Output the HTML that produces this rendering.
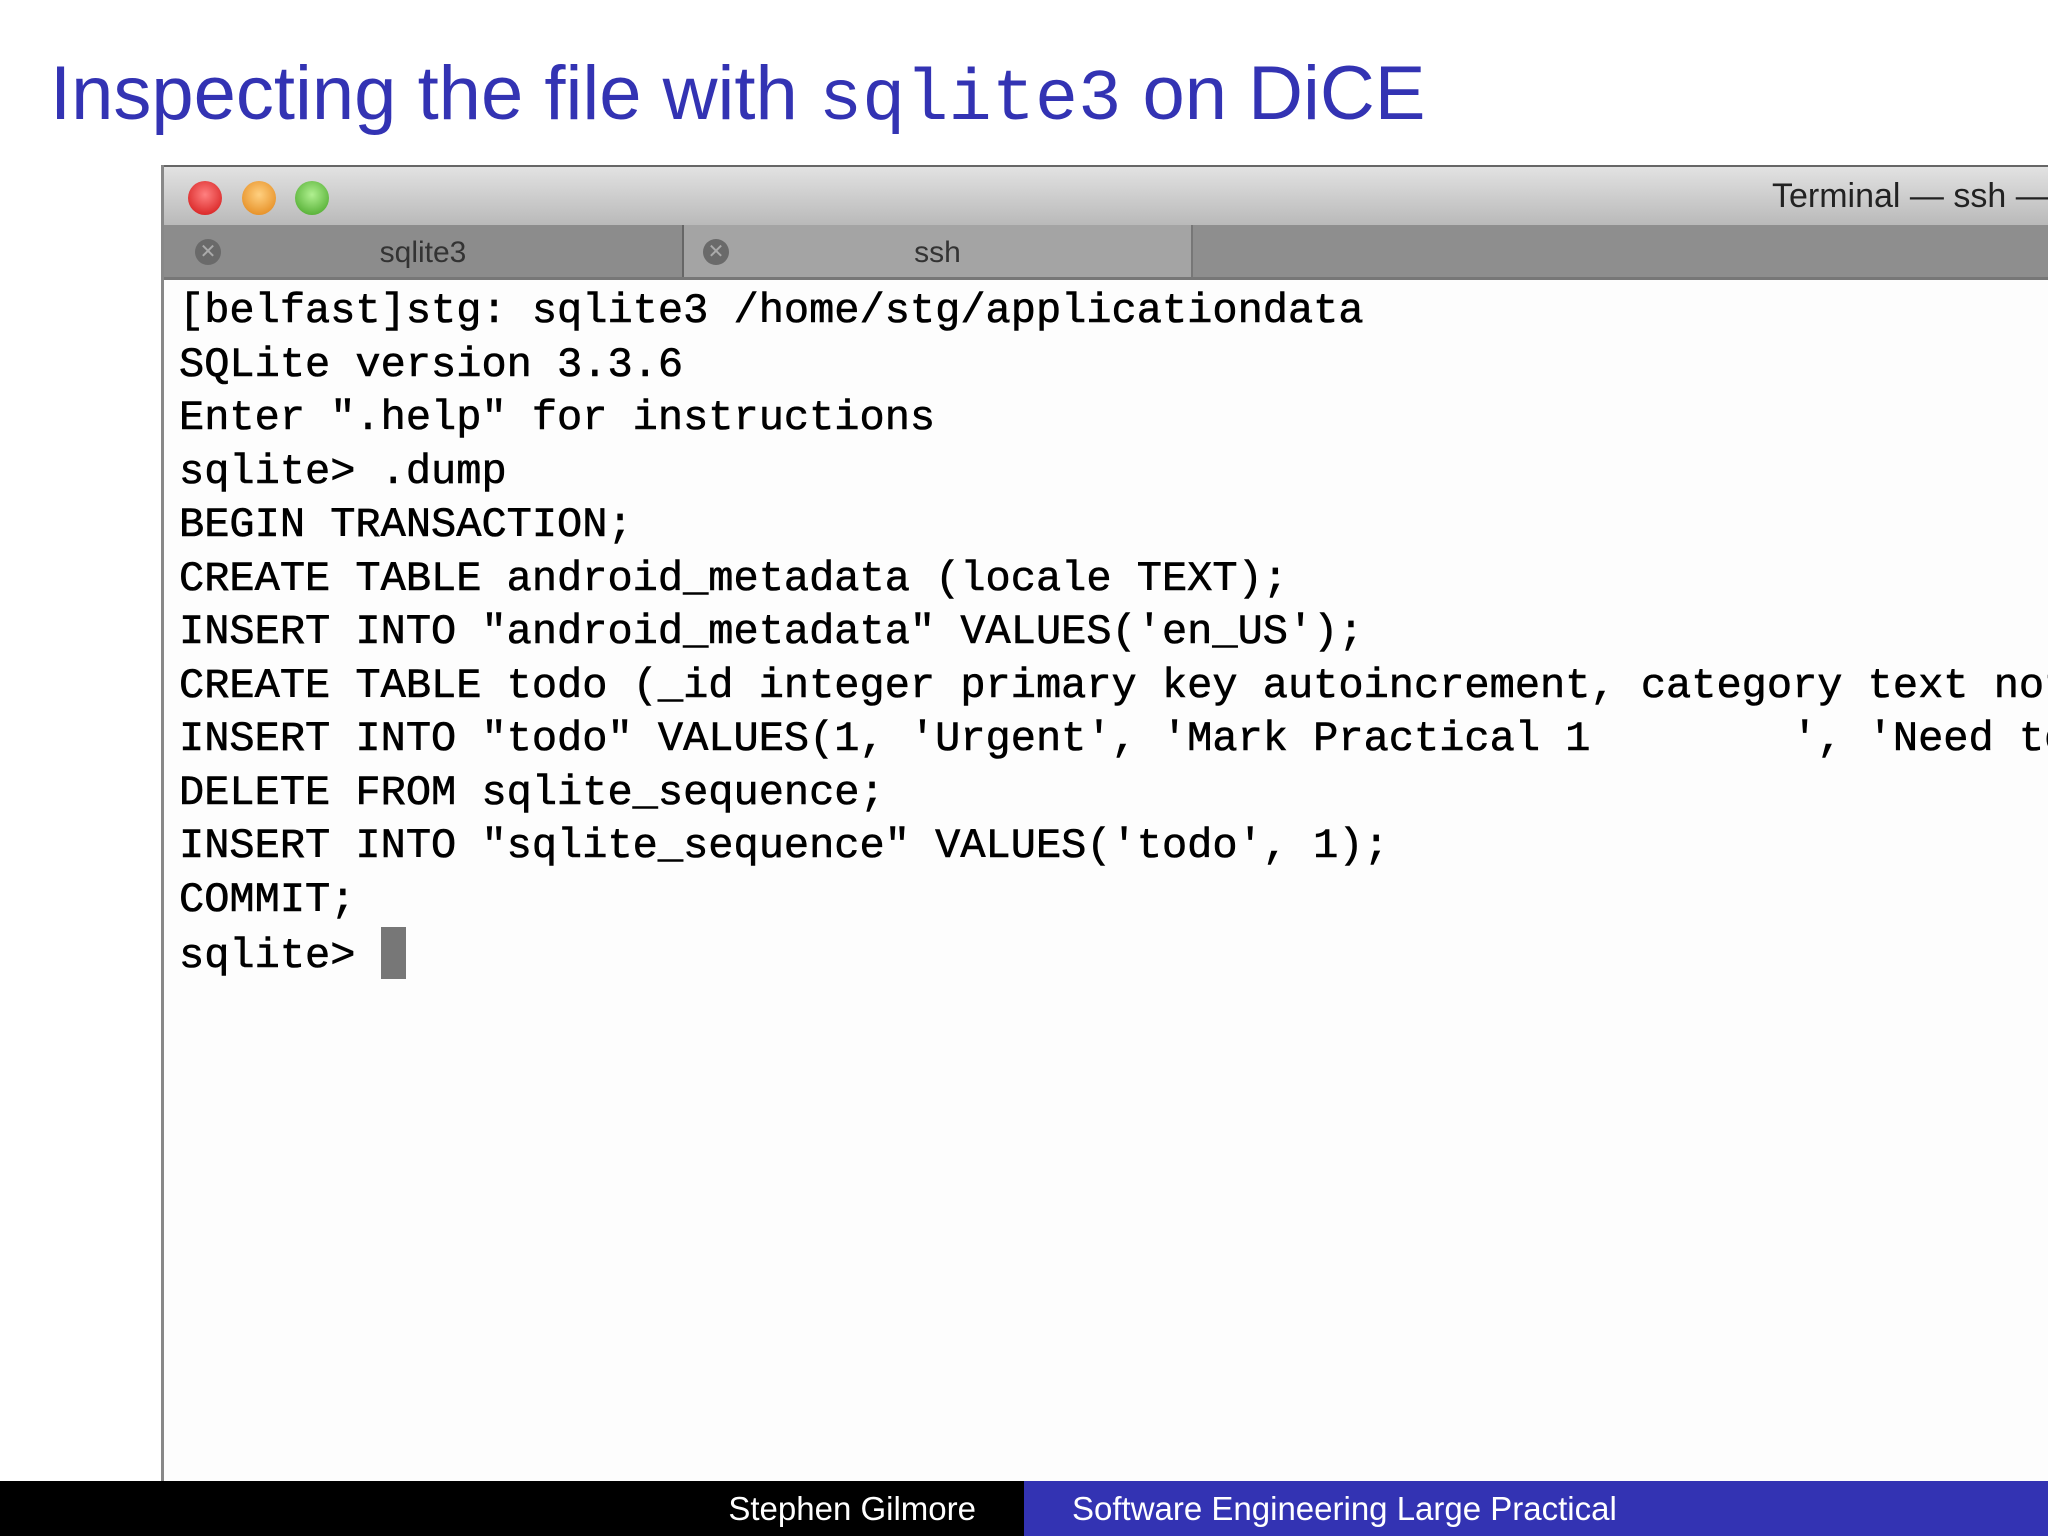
<!DOCTYPE html>
<html><head><meta charset="utf-8"><style>
body{margin:0;width:2048px;height:1536px;background:#fff;position:relative;overflow:hidden;font-family:"Liberation Sans",sans-serif}
.title{position:absolute;left:50px;top:50px;font-size:76px;color:#3333b3;white-space:nowrap;letter-spacing:0}
.title code{font-family:"Liberation Mono",monospace;font-size:72px;letter-spacing:0}
.win{position:absolute;left:161px;top:165px;width:1884px;height:1316px;background:#fdfdfd;border-left:3px solid #888;overflow:hidden}
.tb{position:absolute;left:0;top:0;right:0;height:60px;background:linear-gradient(#e2e2e2,#b8b8b8);border-top:2px solid #666}
.light{position:absolute;top:14px;width:34px;height:34px;border-radius:50%}
.tt{position:absolute;left:1608px;top:10px;font-size:34px;color:#222;white-space:nowrap}
.tabs{position:absolute;left:0;top:60px;right:0;height:52px;background:#8e8e8e;border-bottom:3px solid #777}
.tab{position:absolute;top:0;height:52px;font-size:30px;color:#333;text-align:center;line-height:56px}
.x{position:absolute;top:14px;width:26px;height:26px;border-radius:50%;background:#6a6a6a;color:#aaa;font-size:20px;line-height:26px;text-align:center}
pre{position:absolute;left:15px;top:120px;margin:0;font-family:"Liberation Mono",monospace;font-size:42px;line-height:53.5px;color:#000;white-space:pre;-webkit-text-stroke:0.6px #000}
.cur{display:inline-block;width:25px;height:52px;background:#777;vertical-align:-12px}
.foot{position:absolute;left:0;top:1481px;width:2048px;height:55px}
.fl{position:absolute;left:0;top:0;width:1024px;height:55px;background:#000;color:#fff;font-size:33px;text-align:right;line-height:55px}
.fr{position:absolute;left:1024px;top:0;width:1024px;height:55px;background:#3333b3;color:#fff;font-size:33px;line-height:55px}
</style></head><body>
<div class="title">Inspecting the file with <code>sqlite3</code> on DiCE</div>
<div class="win">
<div class="tb">
<div class="light" style="left:24px;background:radial-gradient(circle at 50% 40%,#ff8080,#d01010)"></div>
<div class="light" style="left:78px;background:radial-gradient(circle at 50% 40%,#ffd080,#e08010)"></div>
<div class="light" style="left:131px;background:radial-gradient(circle at 50% 40%,#b0f090,#40a020)"></div>
<div class="tt">Terminal — ssh —</div>
</div>
<div class="tabs">
<div class="tab" style="left:0;width:518px;background:#8c8c8c;border-right:2px solid #666">sqlite3</div>
<div class="tab" style="left:520px;width:507px;background:#a4a4a4;border-right:2px solid #777">ssh</div>
<div class="x" style="left:31px">✕</div>
<div class="x" style="left:539px">✕</div>
</div>
<pre>[belfast]stg: sqlite3 /home/stg/applicationdata
SQLite version 3.3.6
Enter ".help" for instructions
sqlite&gt; .dump
BEGIN TRANSACTION;
CREATE TABLE android_metadata (locale TEXT);
INSERT INTO "android_metadata" VALUES('en_US');
CREATE TABLE todo (_id integer primary key autoincrement, category text not null
INSERT INTO "todo" VALUES(1, 'Urgent', 'Mark Practical 1        ', 'Need to
DELETE FROM sqlite_sequence;
INSERT INTO "sqlite_sequence" VALUES('todo', 1);
COMMIT;
sqlite&gt; <span class="cur"></span></pre>
</div>
<div class="foot">
<div class="fl"><span style="margin-right:48px">Stephen Gilmore</span></div>
<div class="fr"><span style="margin-left:48px">Software Engineering Large Practical</span></div>
</div>
</body></html>
